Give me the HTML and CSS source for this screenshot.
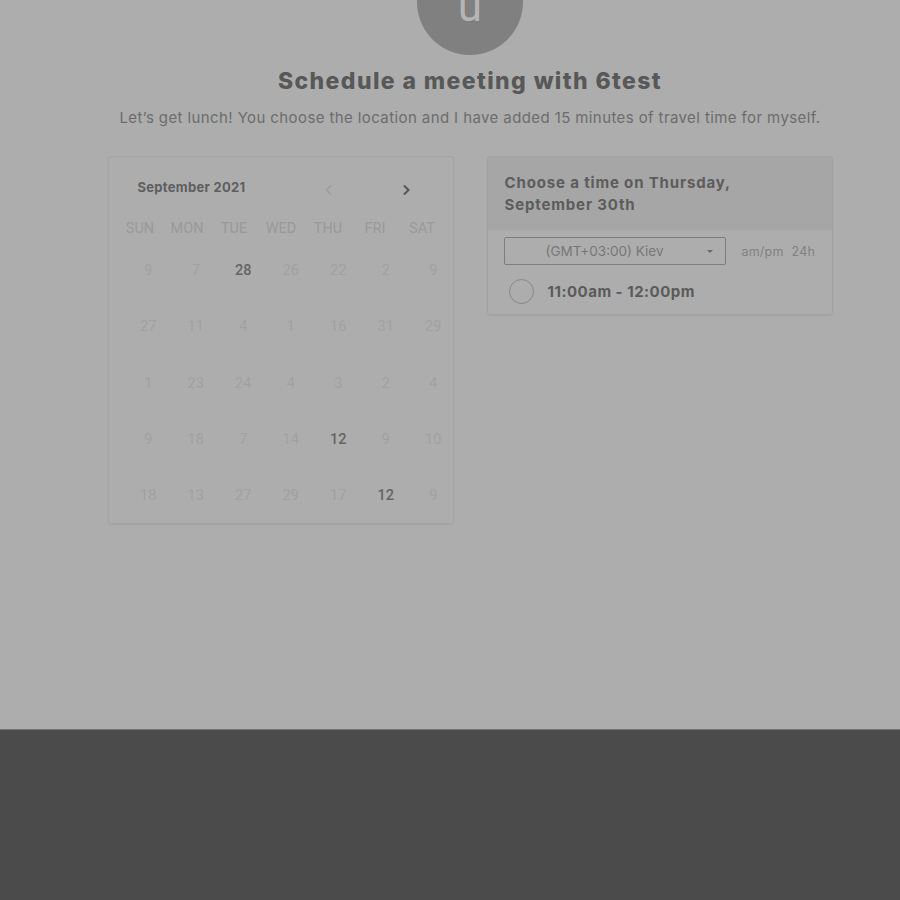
FILE: index.html
```html
<!DOCTYPE html>
<html>
<head>
<meta charset="utf-8">
<link rel="stylesheet" href="styles.css">
</head>
<body>
<div class="page">
  <div class="main">
    <div class="avatar"><span>u</span></div>
    <h1 class="title">Schedule a meeting with 6test</h1>
    <p class="subtitle">Let’s get lunch! You choose the location and I have added 15 minutes of travel time for myself.</p>
    <div class="cards">
      <div class="card calendar">
        <div class="cal-head">
          <span class="month">September 2021</span>
          <span class="nav">
            <svg class="chev prev" width="10" height="12" viewBox="0 0 10 12"><path d="M7 1.5 L2.5 6 L7 10.5" fill="none" stroke="currentColor" stroke-width="1.6"/></svg>
            <svg class="chev next" width="10" height="12" viewBox="0 0 10 12"><path d="M3 1.5 L7.5 6 L3 10.5" fill="none" stroke="currentColor" stroke-width="2"/></svg>
          </span>
        </div>
        <div class="weekdays">
          <span>SUN</span><span>MON</span><span>TUE</span><span>WED</span><span>THU</span><span>FRI</span><span>SAT</span>
        </div>
        <div class="days">
          <span>9</span><span>7</span><span class="on">28</span><span>26</span><span>22</span><span>2</span><span>9</span>
          <span>27</span><span>11</span><span>4</span><span>1</span><span>16</span><span>31</span><span>29</span>
          <span>1</span><span>23</span><span>24</span><span>4</span><span>3</span><span>2</span><span>4</span>
          <span>9</span><span>18</span><span>7</span><span>14</span><span class="on">12</span><span>9</span><span>10</span>
          <span>18</span><span>13</span><span>27</span><span>29</span><span>17</span><span class="on">12</span><span>9</span>
        </div>
      </div>
      <div class="card times">
        <div class="times-head">Choose a time on Thursday,<br>September 30th</div>
        <div class="tz-row">
          <div class="select"><span>(GMT+03:00) Kiev</span><i class="caret"></i></div>
          <div class="fmt"><span>am/pm</span><span>24h</span></div>
        </div>
        <div class="slot"><span class="radio"></span><span>11:00am - 12:00pm</span></div>
      </div>
    </div>
  </div>
  <div class="footer"></div>
</div>
</body>
</html>
```
FILE: styles.css
```css
* { box-sizing: border-box; }
html, body { margin: 0; padding: 0; }
body {
  background: #adadad;
  font-family: Inter, "Liberation Sans", sans-serif;
  overflow: hidden;
}
.page { width: 900px; height: 900px; display: flex; flex-direction: column; }
.main {
  height: 729px;
  display: flex;
  flex-direction: column;
  align-items: center;
  padding-left: 40px;
}
.avatar {
  width: 106px;
  height: 106px;
  border-radius: 50%;
  background: #808080;
  margin-top: -51px;
  display: flex;
  justify-content: center;
  align-items: flex-end;
}
.avatar span {
  font-family: Roboto, sans-serif;
  font-size: 44px;
  color: #b5b5b5;
  line-height: 1;
  padding-bottom: 27px;
}
.title {
  margin: 11px 0 0;
  font-size: 23px;
  font-weight: 800;
  letter-spacing: 1.4px;
  color: #585858;
  line-height: 30px;
}
.subtitle {
  margin: 12px 0 0;
  font-size: 15px;
  letter-spacing: 0.4px;
  color: #6c6c6c;
  line-height: 20px;
}
.cards {
  display: flex;
  gap: 33px;
  margin-top: 28px;
  align-items: flex-start;
}
.card {
  width: 346px;
  border: 1px solid #a3a3a3;
  border-radius: 3px;
  box-shadow: 0 1px 2px rgba(0,0,0,0.06);
}
.calendar { height: 368px; font-family: Roboto, sans-serif; }
.cal-head {
  display: flex;
  align-items: center;
  padding: 18px 0 0 29px;
  height: 41px;
}
.month {
  font-family: Inter, sans-serif;
  font-size: 13px;
  letter-spacing: 0.3px;
  font-weight: 700;
  color: #5e5e5e;
  width: 186px;
}
.nav { display: flex; align-items: center; gap: 67px; padding-top: 7px; }
.chev.prev { color: #9d9d9d; }
.chev.next { color: #555555; }
.weekdays {
  display: grid;
  grid-template-columns: repeat(7, 47px);
  padding-left: 8px;
  margin-top: 21px;
  font-size: 14.5px;
  color: #999999;
  line-height: 20px;
}
.weekdays span { text-align: center; }
.days {
  display: grid;
  grid-template-columns: repeat(7, 47.5px);
  grid-auto-rows: 56.3px;
  padding-left: 16px;
  margin-top: 22px;
  font-size: 14.5px;
  color: #a1a1a1;
  line-height: 20px;
}
.days span { text-align: center; }
.days .on { color: #656565; font-weight: 500; }
.times { height: 159px; }
.times-head {
  background: #a6a6a6;
  height: 73px;
  padding: 15px 17px 0;
  font-size: 15px;
  letter-spacing: 0.85px;
  font-weight: 700;
  color: #5c5c5c;
  line-height: 22px;
}
.tz-row {
  display: flex;
  align-items: center;
  padding: 7px 0 0 16px;
}
.select {
  width: 222px;
  height: 28px;
  border: 1px solid #7d7d7d;
  border-radius: 2px;
  display: flex;
  align-items: center;
  justify-content: center;
  position: relative;
  font-size: 13.5px;
  color: #777777;
  padding-right: 20px;
}
.caret {
  position: absolute;
  right: 12px;
  top: 12px;
  width: 0; height: 0;
  border-left: 3.5px solid transparent;
  border-right: 3.5px solid transparent;
  border-top: 3.5px solid #6a6a6a;
}
.fmt {
  margin-left: 16px;
  display: flex;
  gap: 8px;
  font-size: 12.5px;
  letter-spacing: 0.2px;
  color: #808080;
}
.slot {
  display: flex;
  align-items: center;
  gap: 14px;
  padding: 14px 0 0 21px;
  font-size: 15px;
  letter-spacing: 0.5px;
  font-weight: 700;
  color: #5a5a5a;
}
.radio {
  width: 25px;
  height: 25px;
  border-radius: 50%;
  border: 1.5px solid #878787;
}
.footer {
  flex: 1;
  background: #4b4b4b;
  border-top: 1px solid #767676;
}
```
